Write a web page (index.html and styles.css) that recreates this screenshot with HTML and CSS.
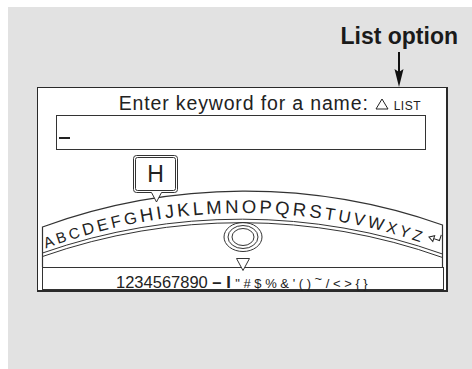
FILE: index.html
```html
<!DOCTYPE HTML>
<html>
<head>
    <title>Enter keyword</title>
    <meta charset="utf-8">
<!--css-->
    <link rel="stylesheet" href="styles.css">
</head>
<body>
<div class="panel">
    <h2 class="callout">List option</h2>
    <svg class="arrow" width="12" height="38" viewBox="0 0 12 38">
        <line x1="6" y1="3" x2="6" y2="24" stroke="#111" stroke-width="2"/>
        <polygon points="1.5,20 6,23 10.5,20 6,38" fill="#111"/>
    </svg>

    <!--screen-->
    <div class="screen">
        <div class="prompt">
            <span class="prompt-text">Enter keyword for a name:</span>
            <svg class="tri" width="14" height="12" viewBox="0 0 14 12">
                <polygon points="7,1 13,11 1,11" fill="none" stroke="#222" stroke-width="1"/>
            </svg>
            <span class="list">LIST</span>
        </div>
        <div class="input"><i class="cursor"></i></div>

        <svg class="keyboard" width="408" height="117" viewBox="0 0 408 117">
            <!--tray-->
            <path d="M4.5,117 L4.5,77 A592,592 0 0 1 404.5,75 L404.5,117" fill="none" stroke="#333" stroke-width="1.2"/>
            <path d="M4.5,103 A600,600 0 0 1 404.5,104" fill="none" stroke="#333" stroke-width="1"/>
            <path d="M4.5,106.5 A600,600 0 0 1 404.5,107.5" fill="none" stroke="#333" stroke-width="1"/>

            <!--letters-->
            <path id="base" d="M4,100 A560,560 0 0 1 404,100" fill="none"/>
            <text class="letters">
                <textPath href="#base" startOffset="4" textLength="382" lengthAdjust="spacing"><tspan font-size="15">ABC</tspan><tspan font-size="16.5">DEFG</tspan><tspan font-size="18.5">HIJKLMNOPQRS</tspan><tspan font-size="17">TUVW</tspan><tspan font-size="15.5">XYZ</tspan></textPath>
            </text>
            <g transform="rotate(18 397 88)" fill="none" stroke="#222" stroke-width="1">
                <polygon points="391,89 396,86 396,92"/>
                <polyline points="396,89 402,89 402,83"/>
            </g>

            <!--balloon-->
            <path d="M98.5,5.5 h38 a3,3 0 0 1 3,3 v31 a3,3 0 0 1 -3,3 h-13 l-5,9.5 l-5,-9.5 h-15 a3,3 0 0 1 -3,-3 v-31 a3,3 0 0 1 3,-3z" fill="#fff" stroke="#333" stroke-width="1"/>
            <rect x="97.5" y="7.5" width="40" height="33" rx="2" fill="none" stroke="#333" stroke-width="1"/>
            <text class="big" x="117.5" y="32" text-anchor="middle">H</text>

            <!--dial-->
            <ellipse cx="205" cy="87" rx="19" ry="14.5" fill="none" stroke="#333" stroke-width="1"/>
            <ellipse cx="205" cy="87" rx="15" ry="11.5" fill="none" stroke="#333" stroke-width="1"/>
            <ellipse cx="205" cy="87" rx="11" ry="8.5" fill="none" stroke="#333" stroke-width="1"/>
            <polygon points="198.5,108.5 211.5,108.5 205,120.5" fill="#fff" stroke="#333" stroke-width="1"/>
        </svg>

        <div class="chars">1234567890 <span class="dash">–</span> <b>I</b> <span class="sym">"#$%&amp;'()<span class="tilde">~</span>/&lt;&gt;{}</span></div>
    </div>
</div>
</body>
</html>
```

FILE: styles.css
```css
*{ margin:0; padding:0; box-sizing:border-box;}
body{
    background:#fff;
    font-family:"Liberation Sans", Arial, sans-serif;
    color:#222;
}
.panel{
    margin:7px 0 0 8px;
    min-height:362px;
    background:#e2e2e2;
    padding-top:16px;
}
.callout{
    font-size:23px;
    line-height:26px;
    font-weight:bold;
    text-align:right;
    padding-right:14px;
    color:#1a1a1a;
}
.arrow{
    display:block;
    margin-left:385px;
}
.screen{
    margin-left:29px;
    width:411px;
    background:#fff;
    border:1px solid #2a2a2a;
    border-right-width:2px;
    border-bottom-width:2px;
}
.prompt{
    display:flex;
    justify-content:flex-end;
    align-items:baseline;
    padding:5px 25px 0 0;
    height:25px;
    font-size:19.5px;
    line-height:20px;
}
.prompt-text{
    letter-spacing:0.85px;
}
.tri{
    margin:0 5px 0 6px;
    align-self:center;
    position:relative;
    top:1px;
}
.list{
    font-size:12px;
    letter-spacing:0.5px;
}
.input{
    margin:2px 0 0 18px;
    width:370px;
    height:35px;
    border:1px solid #333;
}
.cursor{
    display:block;
    width:11px;
    height:2px;
    background:#222;
    margin:21px 0 0 2px;
}
.keyboard{
    display:block;
    overflow:visible;
}
.letters{
    font-family:"Liberation Sans", Arial, sans-serif;
    fill:#222;
}
.big{
    font-family:"Liberation Sans", Arial, sans-serif;
    font-size:23px;
    fill:#222;
}
.chars{
    margin:0 2px 0 4px;
    height:23px;
    border:1px solid #333;
    padding-left:73px;
    font-size:16.5px;
    line-height:21px;
    white-space:nowrap;
}
.dash{
    font-weight:bold;
}
.sym{
    font-size:13px;
    letter-spacing:3.6px;
}
.tilde{
    vertical-align:5px;
}
```
